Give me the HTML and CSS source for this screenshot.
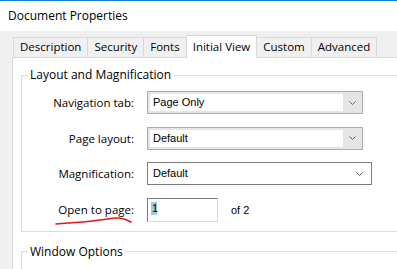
FILE: index.html
```html
<html lang="en-US">
<head>
  <meta charset="UTF-8">
  <meta name="viewport" content="width=device-width">
  <title>Document Properties</title>
  <link rel="stylesheet" href="styles.css">
</head>

<body>

<div class="titlebar">Document Properties</div>

<div class="dialog">
  <div class="tabs">
    <div class="tab">Description</div>
    <div class="tab">Security</div>
    <div class="tab">Fonts</div>
    <div class="tab active">Initial View</div>
    <div class="tab">Custom</div>
    <div class="tab">Advanced</div>
  </div>

  <div class="panel">
    <fieldset class="group">
      <legend>Layout and Magnification</legend>
      <div class="fields">
        <span class="label">Navigation tab:</span>
        <div class="combo">
          <span class="value">Page Only</span>
          <span class="arrow"><svg width="7" height="4"><polyline points="0.5,0.5 3.5,3.5 6.5,0.5"/></svg></span>
        </div>

        <span class="label">Page layout:</span>
        <div class="combo">
          <span class="value">Default</span>
          <span class="arrow"><svg width="7" height="4"><polyline points="0.5,0.5 3.5,3.5 6.5,0.5"/></svg></span>
        </div>

        <span class="label">Magnification:</span>
        <div class="combo edit">
          <span class="value">Default</span>
          <span class="arrow"><svg width="7" height="4"><polyline points="0.5,0.5 3.5,3.5 6.5,0.5"/></svg></span>
        </div>

        <span class="label"><span class="marked">Open to page:
          <svg class="scribble" width="80" height="10"><path d="M1 8 C 15 7, 30 6, 45 4 S 66 0, 76 6"/></svg>
        </span></span>
        <div class="pagerow">
          <div class="textbox"><span class="sel">1</span></div>
          <span class="of">of 2</span>
        </div>
      </div>
    </fieldset>

    <fieldset class="group second">
      <legend>Window Options</legend>
    </fieldset>
  </div>
</div>

</body>
</html>
```

FILE: styles.css
```css
body {
    margin: 0;
    width: 397px;
    height: 269px;
    overflow: hidden;
    background: #f0f0f0;
    font-family: "Open Sans", "Noto Sans", sans-serif;
    font-size: 11.5px;
    color: #000;
}
.titlebar {
    border-top: 1px solid #1a7fd4;
    background: #fff;
    height: 30px;
    line-height: 30px;
    padding-left: 8px;
    font-size: 12px;
}
.dialog {
    padding: 6px 0 0 12px;
}
.tabs {
    display: flex;
    align-items: flex-start;
    height: 20px;
    margin-left: 1px;
}
.tab {
    box-sizing: border-box;
    height: 20px;
    line-height: 18px;
    padding: 0 6px;
    border: 1px solid #d9d9d9;
    border-bottom: none;
    margin-right: -1px;
    background: #f0f0f0;
}
.tab.active {
    position: relative;
    z-index: 1;
    height: 23px;
    margin-top: -2px;
    line-height: 21px;
    background: #fff;
}
.panel {
    background: #fff;
    border: 1px solid #d9d9d9;
    margin-right: -30px;
    height: 240px;
}
.group {
    border: 1px solid #dcdcdc;
    margin: 9px -10px 0 8px;
    padding: 8px 0 9px 0;
    min-width: 0;
}
.group legend {
    margin-left: 6px;
    padding: 0 3px 0 2px;
    line-height: 16px;
    font-size: 12px;
}
.group.second {
    margin-top: 12px;
    height: 60px;
}
.fields {
    display: grid;
    grid-template-columns: 112px max-content;
    column-gap: 13px;
    row-gap: 12.5px;
    align-items: center;
}
.label {
    text-align: right;
}
.marked {
    position: relative;
}
.scribble {
    position: absolute;
    left: -3px;
    top: 14px;
}
.scribble path {
    fill: none;
    stroke: #e8141b;
    stroke-width: 1.6;
    stroke-linecap: round;
}
.combo {
    box-sizing: border-box;
    display: flex;
    width: 216px;
    height: 23px;
    border: 1px solid #adadad;
    background: #e5e5e5;
    padding: 2px 0 2px 2px;
    font-family: "Liberation Sans", Arial, sans-serif;
    font-size: 11px;
}
.combo .value {
    flex: 1;
    background: #fff;
    padding-left: 3px;
    line-height: 17px;
}
.combo .arrow {
    width: 19px;
    display: flex;
    align-items: center;
    justify-content: center;
}
.arrow svg polyline {
    fill: none;
    stroke: #606060;
    stroke-width: 1;
}
.combo.edit {
    width: 225px;
    border-color: #7a7a7a;
    background: #fff;
}
.combo.edit .arrow {
    width: 24px;
}
.pagerow {
    display: flex;
    align-items: center;
    gap: 13px;
}
.textbox {
    box-sizing: border-box;
    width: 71px;
    height: 24px;
    border: 1px solid #d9d9d9;
    border-top-color: #7a7a7a;
    border-left-color: #7a7a7a;
    padding: 3px 0 0 3px;
    font-family: "Liberation Sans", Arial, sans-serif;
    font-size: 11px;
    line-height: 13px;
}
.sel {
    display: inline-block;
    background: #99c9ef;
    padding: 0 0 0 1px;
    width: 5px;
}
.of {
    font-family: "Liberation Sans", Arial, sans-serif;
    font-size: 11px;
}
```
